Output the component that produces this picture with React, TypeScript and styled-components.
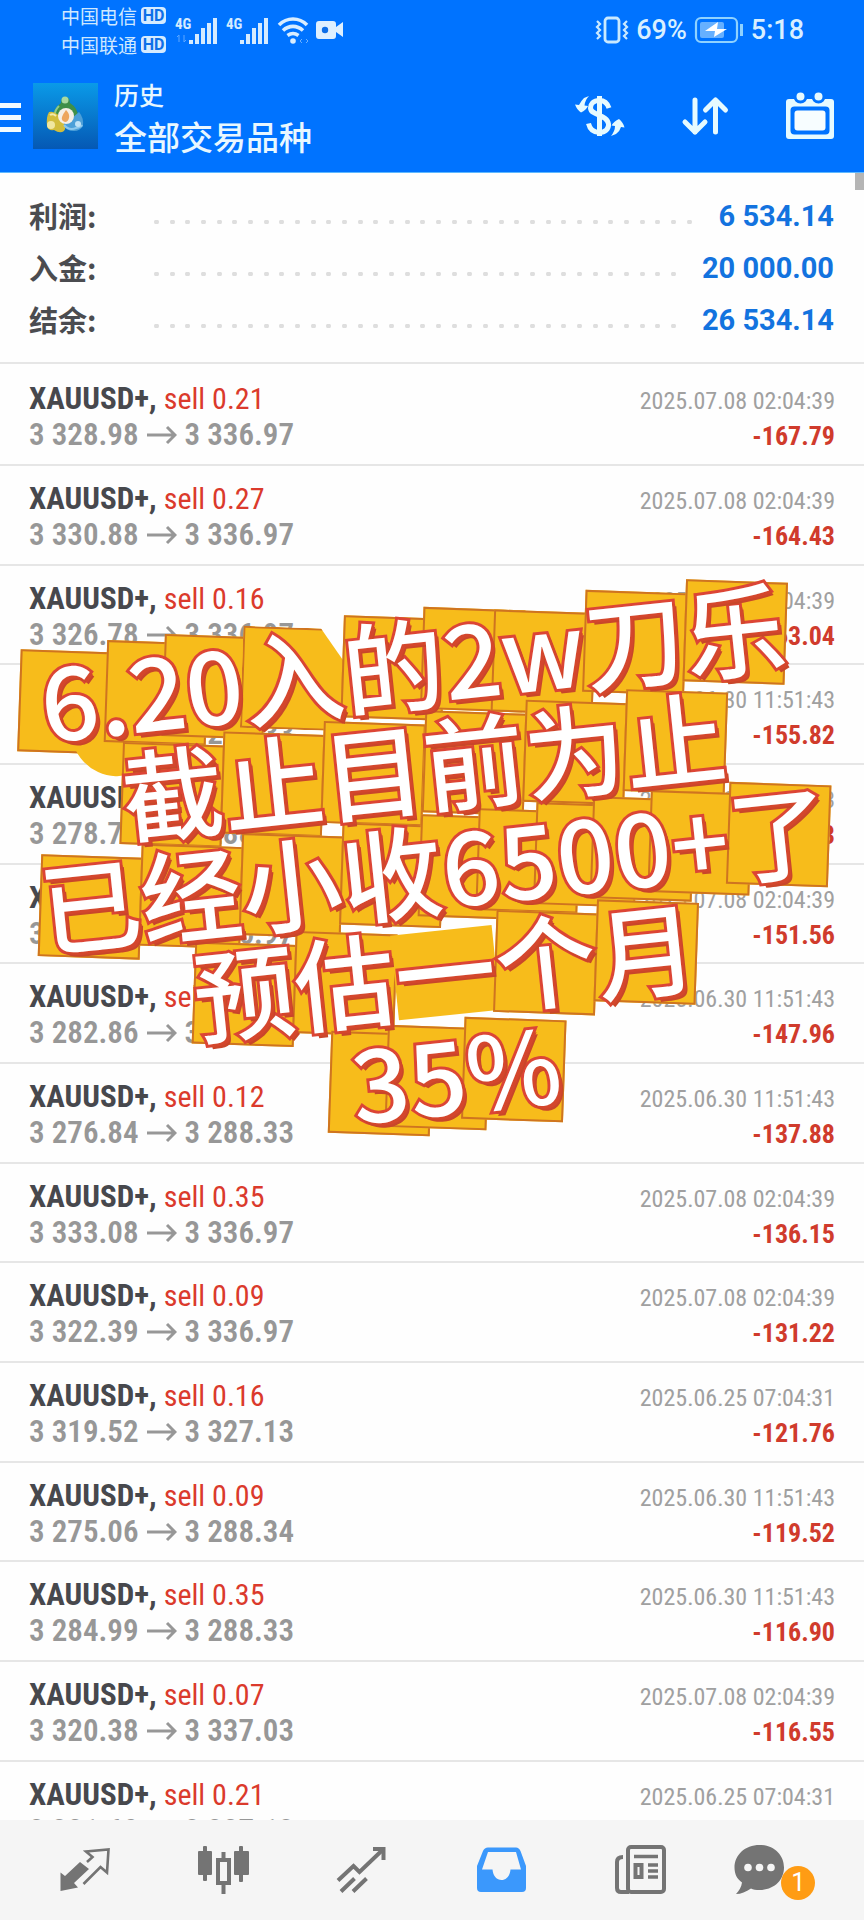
import React from "react";
import styled, { createGlobalStyle, css } from "styled-components";

const GlobalStyle = createGlobalStyle`
  *, *::before, *::after { box-sizing: border-box; }
  body {
    margin: 0;
    background: #fefefe;
    font-family: Roboto, "Noto Sans CJK SC", sans-serif;
  }
`;

const narrow = `"Roboto Condensed", "Liberation Sans Narrow", "Noto Sans CJK SC", sans-serif`;

const Screen = styled.div`
  position: relative;
  display: flex;
  flex-direction: column;
  height: 100vh;
  overflow: hidden;
`;

/* ---------- header ---------- */

const Header = styled.header`
  flex: none;
  background: #0073ff;
  color: #e8f7ff;
  height: 173px;
  border-bottom: 1px solid #5fb9ff;
`;

const StatusBar = styled.div`
  display: flex;
  justify-content: space-between;
  height: 59px;
  padding: 0 60px 0 61px;
`;

const StatusGroup = styled.div<{ $gap: number }>`
  display: flex;
  align-items: center;
  gap: ${(p) => p.$gap}px;
`;

const Carriers = styled.div`
  display: flex;
  flex-direction: column;
  margin-right: 2px;
`;

const Carrier = styled.div`
  display: flex;
  align-items: center;
  gap: 4px;
  font-family: "Noto Sans CJK SC", sans-serif;
  font-size: 19px;
  line-height: 29px;
  color: #cfe8ff;
`;

const HdBadge = styled.span`
  width: 25px;
  height: 17px;
  border-radius: 4px;
  background: #d5ebff;
  color: #0d6fe8;
  font: 700 16px/17px Roboto, sans-serif;
  text-align: center;
`;

const StatusText = styled.span`
  font-size: 27px;
  font-weight: 500;
  line-height: 60px;
  color: #d8efff;
`;

const Toolbar = styled.div`
  display: flex;
  align-items: center;
  height: 114px;
  padding: 0 26px 0 0;
`;

const IconButton = styled.button`
  display: block;
  padding: 0;
  border: 0;
  background: none;
  color: inherit;
  line-height: 0;
`;

const Logo = styled.div`
  margin-left: 11px;
  line-height: 0;
`;

const Titles = styled.div`
  flex: 1;
  margin-left: 16px;
  font-family: "Noto Sans CJK SC", sans-serif;
  font-weight: 500;
`;

const Title = styled.h1`
  margin: 0;
  font-size: 25px;
  font-weight: 500;
  line-height: 40px;
`;

const Subtitle = styled.p`
  margin: 0;
  font-size: 33px;
  line-height: 44px;
`;

const Actions = styled.div`
  display: flex;
  gap: 49px;
`;

/* ---------- history ---------- */

const Main = styled.main`
  position: relative;
  flex: 1;
  min-height: 0;
  overflow: hidden;
`;

const ScrollThumb = styled.div`
  position: absolute;
  top: 0;
  right: 0;
  width: 9px;
  height: 17px;
  background: #b5b5b5;
`;

const Summary = styled.dl`
  margin: 0 0 2px;
  padding: 17px 30px 16px 29px;
  border-bottom: 2px solid #e6e6e6;
`;

const SummaryRow = styled.div`
  display: flex;
  align-items: center;
  height: 52px;
`;

const SummaryLabel = styled.dt`
  width: 125px;
  font-family: "Noto Sans CJK SC", sans-serif;
  font-size: 29px;
  font-weight: 700;
  line-height: 50px;
  padding-bottom: 2px;
  color: #4b4c50;
`;

const Leader = styled.span`
  flex: 1;
  height: 4px;
  margin: 11px 26px 0 0;
  background-image: radial-gradient(circle, #dedede 2px, transparent 3px),
    radial-gradient(circle, #dedede 2px, transparent 3px),
    radial-gradient(circle, #dedede 2px, transparent 3px);
  background-size: 47px 4px;
  background-position: -21px 0, -5px 0, 10px 0;
`;

const SummaryValue = styled.dd`
  margin: 0;
  font-size: 29px;
  font-weight: 700;
  line-height: 52px;
  color: #1373df;
`;

const Deals = styled.ul`
  margin: 0;
  padding: 0;
  list-style: none;
`;

const Deal = styled.li`
  padding: 15px 29px 11px;
  border-bottom: 2px solid #e6e6e6;
  font-family: ${narrow};
  &:nth-child(3n) {
    padding-bottom: 10px;
  }
`;

const DealLine = styled.div`
  display: flex;
  align-items: baseline;
  justify-content: space-between;
  height: 36px;
  line-height: 36px;
  white-space: nowrap;
`;

const Symbol = styled.span`
  font-size: 31px;
  font-weight: 700;
  color: #47484d;
`;

const Side = styled.span`
  font-size: 30px;
  font-weight: 400;
  color: #db3a2c;
`;

const Prices = styled.span`
  font-size: 31px;
  font-weight: 600;
  color: #979797;
  svg {
    margin: 0 8px;
  }
`;

const Time = styled.time`
  font-size: 24px;
  color: #a0a0a0;
`;

const Profit = styled.span`
  font-size: 26px;
  font-weight: 700;
  color: #d03b2c;
`;

/* ---------- caption sticker ---------- */

type TileShape = "square" | "dot" | "band" | "cutRight" | "low";

const Sticker = styled.div`
  position: absolute;
  top: 608px;
  left: 0;
  right: 0;
  isolation: isolate;
  text-align: center;
  white-space: nowrap;
  transform: rotate(-6deg);
  font-family: "Noto Sans CJK SC", sans-serif;
  font-size: 101px;
  font-weight: 500;
  line-height: 103px;
  color: #fff;
`;

const StickerLine = styled.p`
  margin: 0;
  padding-left: 4px;
`;

const Glyph = styled.span<{ $shape: TileShape }>`
  position: relative;
  display: inline-block;
  -webkit-text-stroke: 6px #dc4535;
  paint-order: stroke fill;
  text-shadow: 2px 2px 0 #d4472d, 3px 3px 0 #d4472d, 4px 5px 0 #c9462a;
  &::before {
    content: "";
    position: absolute;
    z-index: -1;
    top: 6px;
    left: 50%;
    width: 102px;
    height: 102px;
    margin-left: -51px;
    border: 2px solid #cf7420;
    background: #f7bc1b;
    transform: rotate(8deg);
    ${(p) =>
      p.$shape === "dot" &&
      css`
        top: 44px;
        width: 92px;
        height: 92px;
        margin-left: -46px;
        border: 0;
        border-radius: 50%;
      `}
    ${(p) =>
      p.$shape === "band" &&
      css`
        top: 14px;
        height: 85px;
        border: 0;
        transform: none;
      `}
    ${(p) =>
      p.$shape === "low" &&
      css`
        top: 16px;
      `}
    ${(p) =>
      p.$shape === "cutRight" &&
      css`
        clip-path: polygon(0 0, 76% 0, 100% 32%, 100% 100%, 0 100%);
      `}
  }
`;

/* ---------- bottom navigation ---------- */

const Nav = styled.nav`
  flex: none;
  display: flex;
  align-items: center;
  height: 100px;
  padding: 0 14px;
  background: #f5f5f5;
  color: #747474;
`;

const NavItem = styled.a<{ $active?: boolean }>`
  flex: 1;
  display: flex;
  justify-content: center;
  color: ${(p) => (p.$active ? "#3b98fc" : "#747474")};
  text-decoration: none;
`;

const BadgeHolder = styled.span`
  position: relative;
  display: block;
  height: 56px;
  margin-right: 42px;
`;

const Badge = styled.span`
  position: absolute;
  left: 50px;
  top: 24px;
  width: 34px;
  height: 34px;
  border-radius: 50%;
  background: #ff9c14;
  color: #fff;
  font-size: 25px;
  line-height: 34px;
  text-align: center;
`;

/* ---------- drawings ---------- */

const Signal = ({ arrows }: { arrows?: boolean }) => (
  <svg width="44" height="30" viewBox="0 0 44 30" aria-hidden="true">
    <text x="0" y="14" fontFamily="Roboto Condensed, Roboto, sans-serif" fontSize="15" fontWeight="700" fill="#d5ebff">4G</text>
    {arrows && <path d="M4 20v7M2 22l2-2M9 20v7M11 25l-2 2" stroke="#5ea8ff" strokeWidth="1" fill="none" />}
    <g fill="#d5ebff">
      <rect x="14" y="25" width="4" height="4" />
      <rect x="20" y="19" width="4" height="10" />
      <rect x="26" y="13" width="4" height="16" />
      <rect x="32" y="8" width="4" height="21" />
      <rect x="38" y="3" width="4" height="26" />
    </g>
  </svg>
);

const Wifi = () => (
  <svg width="32" height="30" viewBox="0 0 32 30" fill="none" stroke="#d8edff" strokeWidth="3.6" aria-hidden="true">
    <path d="M2 10C10 2 22 2 30 10" />
    <path d="M6 15.500C12 10 20 10 26 15.500" />
    <path d="M10.500 20.500C14 18 18 18 21.500 20.500" />
    <circle cx="16" cy="26" r="2.800" fill="#d8edff" stroke="none" />
    <path d="M25 24l-2 2 2 2M29 24l2 2-2 2" strokeWidth="1" opacity=".5" />
  </svg>
);

const Camera = () => (
  <svg width="28" height="20" viewBox="0 0 28 20" aria-hidden="true">
    <path d="M3 1h14q3 0 3 3v3l7-5v15l-7-5v4q0 3-3 3H3q-3 0-3-3V4q0-3 3-3z" fill="#def0ff" />
    <circle cx="9" cy="10" r="3.200" fill="#0d6fe8" />
  </svg>
);

const Vibrate = () => (
  <svg width="34" height="28" viewBox="0 0 34 28" fill="none" stroke="#c9e9ff" aria-hidden="true">
    <rect x="10" y="2" width="14" height="24" rx="3" strokeWidth="2.800" />
    <path d="M2 5l3 3-3 3 3 3-3 3 3 3-3 3M32 5l-3 3 3 3-3 3 3 3-3 3 3 3" strokeWidth="2.200" />
  </svg>
);

const Battery = () => (
  <svg width="50" height="28" viewBox="0 0 50 28" aria-hidden="true">
    <rect x="2" y="2" width="41" height="24" rx="5" fill="none" stroke="#8fd2ff" strokeWidth="2.200" />
    <rect x="6" y="6" width="24" height="16" rx="2" fill="#66b0ff" />
    <path d="M24 6L11 15h10l-1 6 13-8H23z" fill="#fff" />
    <path d="M47.500 8v12" stroke="#8fd2ff" strokeWidth="3" />
  </svg>
);

const MenuIcon = () => (
  <svg width="22" height="34" viewBox="0 0 22 34" fill="#f2fbff">
    <rect y="4" width="21" height="5" />
    <rect y="16" width="21" height="5" />
    <rect y="28" width="21" height="5" />
  </svg>
);

const LogoArt = () => (
  <svg width="65" height="66" viewBox="0 0 65 66" aria-hidden="true">
    <defs>
      <linearGradient id="logoSky" x1="0" y1="0" x2="0" y2="1">
        <stop offset="0" stopColor="#0a9ae8" />
        <stop offset="1" stopColor="#0558b4" />
      </linearGradient>
    </defs>
    <rect width="65" height="66" fill="url(#logoSky)" />
    <path d="M32 14q5 0 5 6q8 5 8 14l-12 6-13-6q0-8 8-14q0-6 4-6z" fill="#3f8f48" />
    <circle cx="32" cy="17" r="3.500" fill="#a8d9a0" />
    <path d="M26 23q-4 4-4 8" stroke="#8cc98a" strokeWidth="2" fill="none" />
    <path d="M16 29q8-2 14 10q4 6 1 9q-4 3-10-1q-6 1-7-4q-1-9 2-14z" fill="#d2bd3c" />
    <circle cx="18" cy="42" r="4" fill="#f0e7a0" />
    <path d="M17 32q3-2 6 1" stroke="#f3ecae" strokeWidth="2" fill="none" />
    <path d="M46 29q5 6 4 14q-3 5-9 5q-8 0-10-6z" fill="#4c9fd8" />
    <path d="M31 42q5 6 12 3q5-1 6-3" stroke="#8cc8ee" strokeWidth="2" fill="none" />
    <circle cx="45" cy="41" r="3" fill="#bfe2f7" />
    <circle cx="33" cy="33" r="8" fill="#f5efe6" />
    <path d="M33 27q4 4 3 8q-1 4-4 4q-4-1-3-5q1-3 4-7z" fill="#eda65e" />
  </svg>
);

const CurrencyIcon = () => (
  <svg width="56" height="52" viewBox="0 0 56 52" fill="none" stroke="#e6faff">
    <path d="M27.500 6v40" strokeWidth="5" />
    <path d="M37 18C35 12 31 10.500 27.500 10.500C21 10.500 18.500 14 18.500 18C19 26 35 24 36.500 34C37 39 33 42.500 27.500 42.500C22 42.500 18 40 16.500 33.500" strokeWidth="5" />
    <path d="M17 6L12 8Q9 11 7 15L3 14.500Q5 20 9 22.500Q14 20 16 16L12.500 15.500Q13 10 17 6z" fill="#e6faff" stroke="none" />
    <path d="M39 46L44 44Q48 41 49 37L52.500 37.500Q51 32 47 29Q42 31 39.500 35.500L43 36Q43 41 39 46z" fill="#e6faff" stroke="none" />
  </svg>
);

const SortIcon = () => (
  <svg width="56" height="52" viewBox="0 0 56 52" fill="none" stroke="#e6faff" strokeWidth="5" strokeLinecap="round" strokeLinejoin="round">
    <path d="M18 10v32M8 32l10 10 10-10" />
    <path d="M38.500 42V10M28.500 20l10-10 10 10" />
  </svg>
);

const CalendarIcon = () => (
  <svg width="56" height="56" viewBox="0 0 56 56">
    <rect x="4" y="11" width="48" height="40" rx="3" fill="#e6faff" />
    <rect x="8.500" y="18.500" width="39" height="28" rx="4" fill="#0073ff" />
    <rect x="12.500" y="22.500" width="31" height="20" rx="3" fill="#f7fdff" />
    <g fill="#e6faff" stroke="#0073ff" strokeWidth="3">
      <circle cx="18.500" cy="8.500" r="5.500" />
      <circle cx="36.500" cy="8.500" r="5.500" />
    </g>
  </svg>
);

const PriceArrow = () => (
  <svg width="30" height="20" viewBox="0 0 30 20" fill="none" stroke="#979797" strokeWidth="3" role="img" aria-label="to">
    <path d="M0 10h28M20 2l8 8-8 8" />
  </svg>
);

const QuotesIcon = () => (
  <svg width="56" height="56" viewBox="0 0 56 56">
    <path d="M4.500 30.500L9 34L24 20L33 27L18 41L22 45.500L4.500 49z" fill="currentColor" />
    <path d="M31 20L36.500 15L30 9.500L52.500 7.500L51 30.500L44.500 25L27.500 42" fill="none" stroke="currentColor" strokeWidth="2.600" />
  </svg>
);

const ChartsIcon = () => (
  <svg width="56" height="56" viewBox="0 0 56 56" fill="currentColor">
    <rect x="3" y="9" width="14" height="24" rx="1" />
    <rect x="8" y="4" width="4" height="35" rx="1" />
    <rect x="39" y="9" width="15" height="24" rx="1" />
    <rect x="44" y="4" width="4" height="36" rx="1" />
    <rect x="23" y="18" width="11" height="23" fill="none" stroke="currentColor" strokeWidth="4" />
    <path d="M26.500 10h4v7h-4zM26.500 42h4v10h-4z" />
  </svg>
);

const TrendIcon = () => (
  <svg width="56" height="56" viewBox="0 0 56 56" fill="none" stroke="currentColor" strokeWidth="4">
    <path d="M4 38.500L19.500 24L25.500 30L49 7.500" />
    <path d="M39 7h10.500v11" />
    <path d="M7 49.500L20.500 36.500M19 49.500L32.500 36.500" />
  </svg>
);

const InboxIcon = () => (
  <svg width="56" height="56" viewBox="0 0 56 56">
    <path
      fillRule="evenodd"
      fill="currentColor"
      d="M14 5.500H42Q45 5.500 46.500 9L52 24V46Q52 50 48 50H7Q3 50 3 46V24L9 9Q10.500 5.500 14 5.500zM14 10L8 27.500H18.500C19 34 23 38 27.500 38C32 38 36 34 36.500 27.500H47L42 10z"
    />
  </svg>
);

const NewsIcon = () => (
  <svg width="56" height="56" viewBox="0 0 56 56" fill="none" stroke="currentColor" strokeWidth="4">
    <rect x="15" y="5" width="36" height="45" rx="3" />
    <path d="M10 15Q4 15 4 20V46Q4 50 8 50H16" />
    <path d="M21 14.500h24M35 23h10M35 29h10M35 35h10" strokeWidth="3.500" />
    <rect x="22.500" y="23" width="6" height="12" />
  </svg>
);

const ChatIcon = () => (
  <svg width="56" height="56" viewBox="0 0 56 56">
    <path
      fill="currentColor"
      d="M28.500 3C43 3 53 13 53 25.500C53 38 43 48 28.500 48C25 48 22 47.500 20 46.500C15 50 10 52 5 52C8 49 10.500 45 11 40.500C6 37 3.500 32 3.500 25.500C3.500 13 14 3 28.500 3z"
    />
    <g fill="#f5f5f5">
      <circle cx="17" cy="25.500" r="3.800" />
      <circle cx="28.500" cy="25.500" r="3.800" />
      <circle cx="40" cy="25.500" r="3.800" />
    </g>
  </svg>
);

/* ---------- data ---------- */

const totals = [
  ["利润", "6 534.14"],
  ["入金", "20 000.00"],
  ["结余", "26 534.14"],
];

const JUL8 = "2025.07.08 02:04:39";
const JUN30 = "2025.06.30 11:51:43";
const JUN25 = "2025.06.25 07:04:31";

const deals = [
  ["0.21", "3 328.98", "3 336.97", JUL8, "-167.79"],
  ["0.27", "3 330.88", "3 336.97", JUL8, "-164.43"],
  ["0.16", "3 326.78", "3 336.97", JUL8, "-163.04"],
  ["0.14", "3 277.20", "3 288.33", JUN30, "-155.82"],
  ["0.16", "3 278.77", "3 288.33", JUN30, "-152.93"],
  ["0.08", "3 318.02", "3 336.97", JUL8, "-151.56"],
  ["0.27", "3 282.86", "3 288.34", JUN30, "-147.96"],
  ["0.12", "3 276.84", "3 288.33", JUN30, "-137.88"],
  ["0.35", "3 333.08", "3 336.97", JUL8, "-136.15"],
  ["0.09", "3 322.39", "3 336.97", JUL8, "-131.22"],
  ["0.16", "3 319.52", "3 327.13", JUN25, "-121.76"],
  ["0.09", "3 275.06", "3 288.34", JUN30, "-119.52"],
  ["0.35", "3 284.99", "3 288.33", JUN30, "-116.90"],
  ["0.07", "3 320.38", "3 337.03", JUL8, "-116.55"],
  ["0.21", "3 321.60", "3 327.13", JUN25, ""],
];

const caption = ["6.20入的2w刀乐", "截止目前为止", "已经小收6500+了", "预估一个月", "35%"];

const shapes: Record<string, TileShape> = { ".": "dot", 一: "band", 入: "cutRight", w: "low" };

export default function App() {
  return (
    <Screen>
      <GlobalStyle />
      <Header>
        <StatusBar>
          <StatusGroup $gap={7}>
            <Carriers>
              <Carrier>中国电信<HdBadge>HD</HdBadge></Carrier>
              <Carrier>中国联通<HdBadge>HD</HdBadge></Carrier>
            </Carriers>
            <Signal arrows />
            <Signal />
            <Wifi />
            <Camera />
          </StatusGroup>
          <StatusGroup $gap={7}>
            <Vibrate />
            <StatusText>69%</StatusText>
            <Battery />
            <StatusText>5:18</StatusText>
          </StatusGroup>
        </StatusBar>
        <Toolbar>
          <IconButton aria-label="菜单"><MenuIcon /></IconButton>
          <Logo><LogoArt /></Logo>
          <Titles>
            <Title>历史</Title>
            <Subtitle>全部交易品种</Subtitle>
          </Titles>
          <Actions>
            <IconButton aria-label="货币"><CurrencyIcon /></IconButton>
            <IconButton aria-label="排序"><SortIcon /></IconButton>
            <IconButton aria-label="日期"><CalendarIcon /></IconButton>
          </Actions>
        </Toolbar>
      </Header>

      <Main>
        <ScrollThumb />
        <Summary>
          {totals.map(([label, value]) => (
            <SummaryRow key={label}>
              <SummaryLabel>{label}:</SummaryLabel>
              <Leader />
              <SummaryValue>{value}</SummaryValue>
            </SummaryRow>
          ))}
        </Summary>
        <Deals>
          {deals.map(([volume, open, close, time, profit], i) => (
            <Deal key={i}>
              <DealLine>
                <Symbol>XAUUSD+, <Side>sell {volume}</Side></Symbol>
                <Time>{time}</Time>
              </DealLine>
              <DealLine>
                <Prices>{open}<PriceArrow />{close}</Prices>
                <Profit>{profit}</Profit>
              </DealLine>
            </Deal>
          ))}
        </Deals>
      </Main>

      <Nav>
        <NavItem href="#quotes" aria-label="行情"><QuotesIcon /></NavItem>
        <NavItem href="#charts" aria-label="图表"><ChartsIcon /></NavItem>
        <NavItem href="#trade" aria-label="交易"><TrendIcon /></NavItem>
        <NavItem href="#history" aria-label="历史" $active><InboxIcon /></NavItem>
        <NavItem href="#news" aria-label="新闻"><NewsIcon /></NavItem>
        <NavItem href="#messages" aria-label="消息">
          <BadgeHolder>
            <ChatIcon />
            <Badge>1</Badge>
          </BadgeHolder>
        </NavItem>
      </Nav>

      <Sticker>
        {caption.map((line) => (
          <StickerLine key={line}>
            {Array.from(line).map((ch, i) => (
              <Glyph key={i} $shape={shapes[ch] ?? "square"}>{ch}</Glyph>
            ))}
          </StickerLine>
        ))}
      </Sticker>
    </Screen>
  );
}
